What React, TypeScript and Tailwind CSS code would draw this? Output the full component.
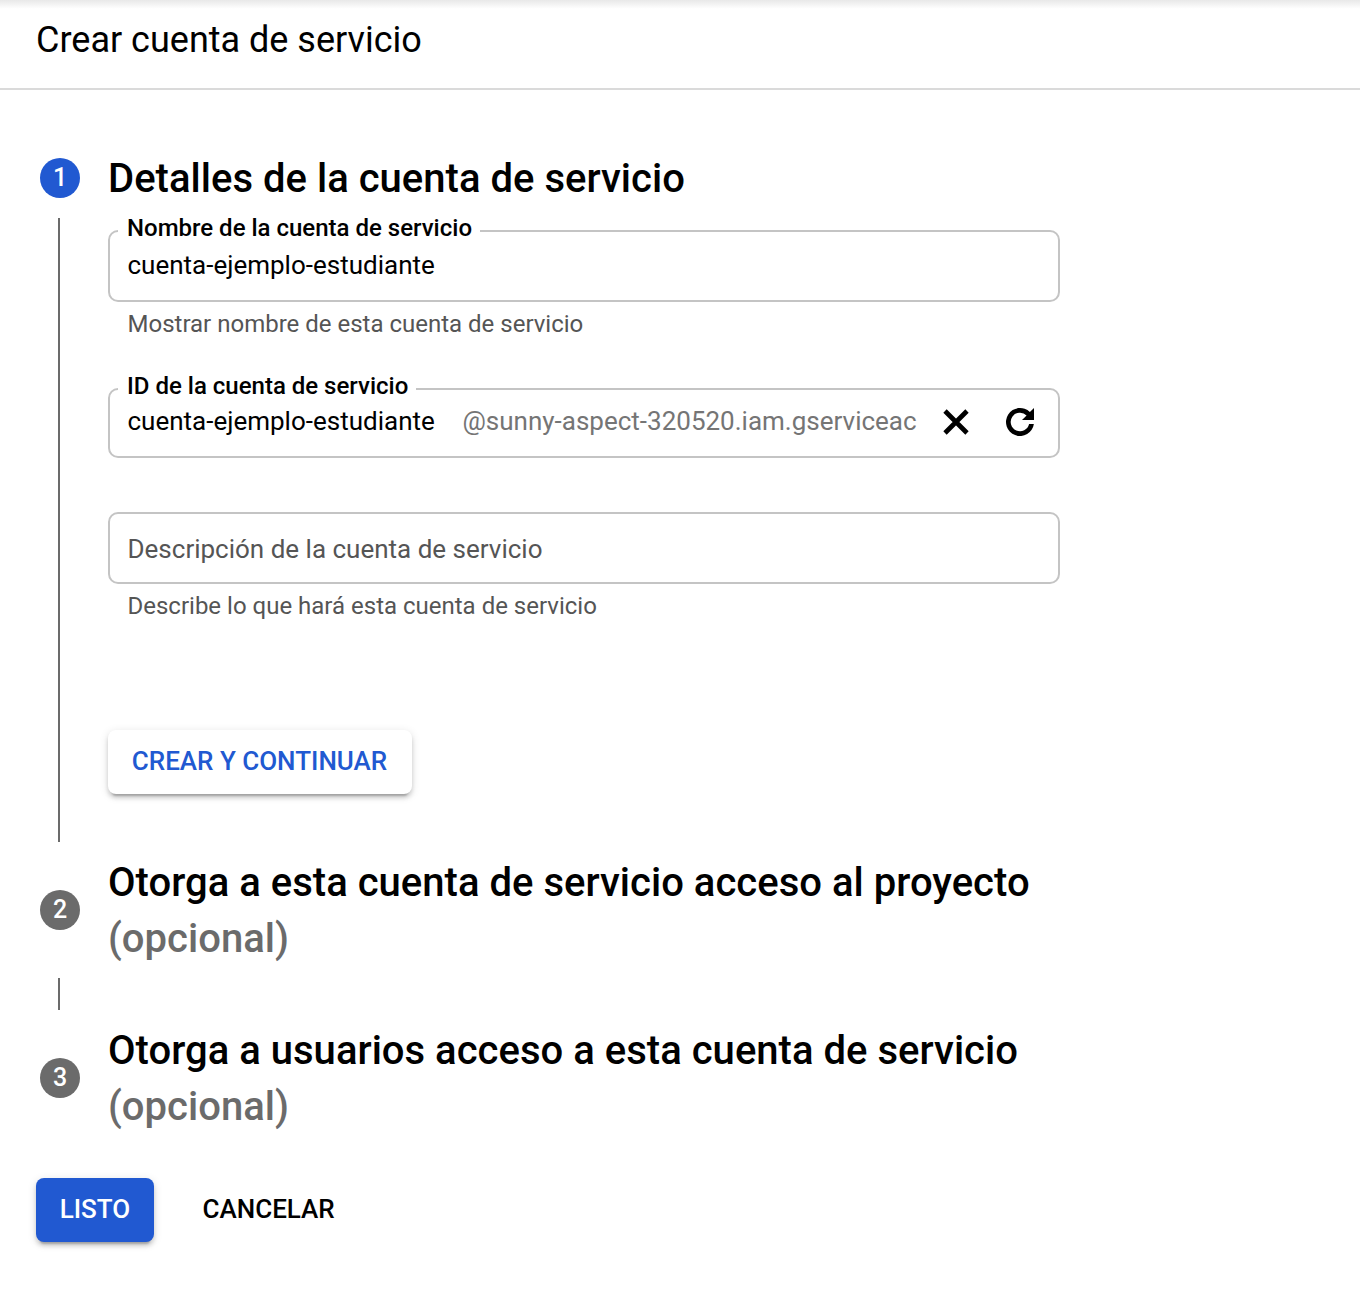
import React from "react";

function Badge({ n, active }: { n: string; active?: boolean }) {
  return (
    <div className={`flex h-10 w-10 shrink-0 items-center justify-center rounded-full pb-[2px] text-[25px] leading-none font-medium text-white ${active ? "bg-[#2159d1]" : "bg-[#6b6b6b]"}`}>
      {n}
    </div>
  );
}

function OptionalStep({ n, title }: { n: string; title: string }) {
  return (
    <section className="flex h-[112px] items-center gap-7 pl-10">
      <Badge n={n} />
      <h2 className="pt-[2px] text-[40px] leading-[56px] font-medium tracking-[0.02px] whitespace-nowrap">
        {title}
        <span className="block text-[#6b6b6b]">(opcional)</span>
      </h2>
    </section>
  );
}

function FieldLabel({ children }: { children: string }) {
  return (
    <legend className="-ml-[10px] pr-2 pb-[6px] pl-[9.5px] text-[24px] leading-[26px] font-medium">{children}</legend>
  );
}

export default function App() {
  return (
    <main className="h-[1308px] w-[1360px] overflow-hidden bg-white font-[Roboto,sans-serif] text-black">
      <header className="flex h-[90px] items-start border-b-2 border-[#dadada] bg-linear-to-b from-[#e8e8e8] from-0% to-white to-[10%] pt-4 pl-9">
        <h1 className="text-[36px] leading-[48px]">Crear cuenta de servicio</h1>
      </header>
      <section className="flex h-[752px] pl-10">
        <div className="flex w-10 flex-col pt-[68px]">
          <Badge n="1" active />
          <div className="mt-5 ml-[18px] h-[624px] w-[2px] bg-[#6b6b6b]" />
        </div>
        <div className="ml-7 w-[952px] pt-[61px]">
          <h2 className="h-[56px] text-[40px] leading-[56px] font-medium tracking-[0.02px] whitespace-nowrap">Detalles de la cuenta de servicio</h2>
          <fieldset className="mt-[8px] h-[87px] rounded-[10px] border-2 border-[#c4c4c4] pl-[17.5px]">
            <FieldLabel>Nombre de la cuenta de servicio</FieldLabel>
            <div className="text-[26px] leading-[36px]">cuenta-ejemplo-estudiante</div>
          </fieldset>
          <p className="mt-[6px] pl-[19.5px] text-[24px] leading-[32px] text-[#555555]">Mostrar nombre de esta cuenta de servicio</p>
          <fieldset className="mt-[33px] h-[85px] rounded-[10px] border-2 border-[#c4c4c4] pl-[17.5px]">
            <FieldLabel>ID de la cuenta de servicio</FieldLabel>
            <div className="flex h-8 items-center text-[26px] leading-[32px]">
              <span className="w-[335px]">cuenta-ejemplo-estudiante</span>
              <span className="w-[473.5px] text-[#757575]">@sunny-aspect-320520.iam.gserviceac</span>
              <svg className="mt-[2px] h-10 w-10 shrink-0" viewBox="0 0 40 40" fill="none" stroke="black" strokeWidth="4.7">
                <path d="M9 9 31 31M31 9 9 31" />
              </svg>
              <svg className="mt-[2px] ml-6 h-10 w-10 shrink-0" viewBox="0 0 40 40">
                <path d="M33.86 22A14 14 0 1 1 29.9 10.1L34 6V18H22L26.6 13.4A9.3 9.3 0 1 0 29.08 22Z" />
              </svg>
            </div>
          </fieldset>
          <div className="mt-[54px] flex h-[72px] items-center rounded-[10px] border-2 border-[#c4c4c4] pt-[2px] pl-[17.5px] text-[26px] leading-[36px] text-[#555555]">
            Descripción de la cuenta de servicio
          </div>
          <p className="mt-[6px] pl-[19.5px] text-[24px] leading-[32px] text-[#555555]">Describe lo que hará esta cuenta de servicio</p>
          <button className="mt-[108px] h-16 w-[304px] rounded-lg bg-white pr-px pb-[2px] text-[26px] font-medium text-[#2159d1] shadow-[0_6px_2px_-4px_rgba(0,0,0,0.2),0_4px_4px_0_rgba(0,0,0,0.14),0_2px_10px_0_rgba(0,0,0,0.12)]">
            CREAR Y CONTINUAR
          </button>
        </div>
      </section>
      <div className="pt-3"><OptionalStep n="2" title="Otorga a esta cuenta de servicio acceso al proyecto" /></div>
      <div className="mt-3 ml-[58px] h-8 w-[2px] bg-[#6b6b6b]" />
      <div className="pt-3"><OptionalStep n="3" title="Otorga a usuarios acceso a esta cuenta de servicio" /></div>
      <div className="mt-11 flex items-center pl-9 text-[26px] font-medium">
        <button className="h-16 w-[118px] rounded-lg bg-[#2159d1] pb-[2px] text-white shadow-[0_6px_2px_-4px_rgba(0,0,0,0.2),0_4px_4px_0_rgba(0,0,0,0.14),0_2px_10px_0_rgba(0,0,0,0.12)]">LISTO</button>
        <button className="ml-[48.5px] pb-[2px]">CANCELAR</button>
      </div>
    </main>
  );
}
